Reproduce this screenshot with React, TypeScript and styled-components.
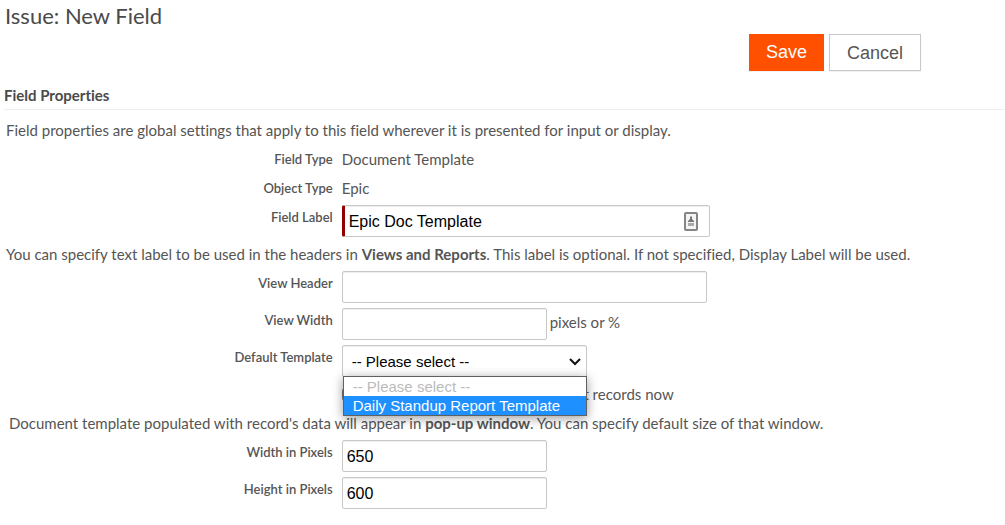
import React from 'react';
import styled, { createGlobalStyle, css } from 'styled-components';

const GlobalStyle = createGlobalStyle`
  *, *::before, *::after { box-sizing: border-box; }
  body {
    margin: 0;
    background: #fff;
    color: #555;
    font-family: Lato, "Liberation Sans", sans-serif;
    font-size: 15px;
    font-variant-ligatures: none;
    line-height: 20px;
  }
`;

const Form = styled.form`
  display: flex;
  flex-direction: column;
`;

const Title = styled.h1`
  margin: 0;
  padding: 2px 5px 0;
  color: #4a4a4a;
  font-size: 22px;
  font-weight: 400;
  line-height: 28px;
`;

const Toolbar = styled.div`
  display: flex;
  justify-content: flex-end;
  gap: 5px;
  margin-top: 4px;
  padding-right: 84px;
`;

const Button = styled.button<{ $primary?: boolean }>`
  height: 37px;
  padding: 0 17px;
  border: 1px solid #c8c8c8;
  background: #fff;
  color: #555;
  font-family: "Liberation Sans", Arial, sans-serif;
  font-size: 18px;
  line-height: 20px;
  box-shadow: 0 1px 1px rgba(0, 0, 0, 0.05);
  ${({ $primary }) =>
    $primary &&
    css`
      padding: 0 16px 2px;
      border-color: #ff5000;
      background: #ff5000;
      color: #fff;
    `}
`;

const SectionTitle = styled.h2`
  margin: 14px 0 0 4px;
  padding-bottom: 3px;
  border-bottom: 1px solid #eee;
  color: #4a4a4a;
  font-size: 15px;
  font-weight: 700;
  line-height: 21px;
`;

const Note = styled.p<{ $indent?: number }>`
  margin: 0;
  padding-left: ${({ $indent = 6 }) => $indent}px;
  line-height: 20px;
`;

const Fields = styled.div`
  display: flex;
  flex-direction: column;
  gap: 5px;
  padding: 7px 0 6px;
`;

const Section = styled.section`
  padding: 10px 0 1px;
`;

const Row = styled.div`
  display: grid;
  grid-template-columns: 34% 1fr;
  align-items: start;
`;

const labelStyle = css`
  padding: 2px 9px 0 0;
  font-size: 13px;
  font-weight: 600;
  line-height: 20px;
  text-align: right;
`;

const Label = styled.label`
  ${labelStyle}
`;

const Term = styled.span`
  ${labelStyle}
`;

const Value = styled.span`
  padding: 2px 0;
`;

const Control = styled.div`
  display: flex;
  align-items: center;
  gap: 3px;
`;

const Unit = styled.span`
  padding-bottom: 4px;
`;

const fieldBox = css`
  height: 32px;
  border: 1px solid #c8c8c8;
  border-radius: 2px;
  background: #fff;
  color: #000;
  font-family: "Liberation Sans", Arial, sans-serif;
  font-size: 16px;
  line-height: 20px;
  box-shadow: inset 0 1px 1px rgba(0, 0, 0, 0.07);
`;

const TextInput = styled.input<{ $width: number; $required?: boolean }>`
  ${fieldBox}
  width: ${({ $width }) => $width}px;
  max-width: 100%;
  padding: 2px 4px 0;
  ${({ $required }) =>
    $required &&
    css`
      border-left: 3px solid #900000;
    `}
`;

const InputWrap = styled.div`
  position: relative;
`;

const ContactIcon = styled.svg`
  position: absolute;
  top: 6px;
  right: 11px;
`;

const SelectWrap = styled.div`
  position: relative;
  width: 245px;
`;

const Select = styled.select`
  ${fieldBox}
  display: block;
  appearance: none;
  width: 100%;
  padding: 2px 28px 0 9px;
  font-size: 15px;
`;

const Chevron = styled.svg`
  position: absolute;
  top: 12px;
  right: 6px;
  pointer-events: none;
`;

const Menu = styled.ul`
  position: absolute;
  z-index: 1;
  top: 31px;
  left: 1px;
  right: 0;
  margin: 0;
  padding: 0;
  border: 1px solid #606060;
  background: #fff;
  list-style: none;
  box-shadow: 0 2px 10px rgba(0, 0, 0, 0.4);
`;

const Option = styled.li<{ $active?: boolean }>`
  padding: 0 9px;
  background: ${({ $active }) => ($active ? '#1e90ff' : '#fff')};
  color: ${({ $active }) => ($active ? '#fff' : '#bbb')};
  font-family: "Liberation Sans", Arial, sans-serif;
  font-size: 15px;
  line-height: 19px;
  white-space: nowrap;
`;

const CheckRow = styled.div`
  display: flex;
  align-items: center;
  justify-content: space-between;
  width: 332px;
  padding: 2px 0 3px;
`;

const Checkbox = styled.input`
  width: 13px;
  height: 13px;
  margin: 0;
`;

export default function App() {
  return (
    <Form onSubmit={(e) => e.preventDefault()}>
      <GlobalStyle />
      <Title>Issue: New Field</Title>
      <Toolbar>
        <Button type="submit" $primary>Save</Button>
        <Button type="button">Cancel</Button>
      </Toolbar>
      <SectionTitle>Field Properties</SectionTitle>

      <Section>
        <Note>
          Field properties are global settings that apply to this field wherever it is presented for
          input or display.
        </Note>
        <Fields>
          <Row>
            <Term>Field Type</Term>
            <Value>Document Template</Value>
          </Row>
          <Row>
            <Term>Object Type</Term>
            <Value>Epic</Value>
          </Row>
          <Row>
            <Label htmlFor="field-label">Field Label</Label>
            <Control>
              <InputWrap>
                <TextInput id="field-label" $width={368} $required defaultValue="Epic Doc Template" />
                <ContactIcon width="16" height="20" viewBox="0 0 16 20" aria-hidden="true">
                  <rect x="2" y="2" width="12" height="17" rx="1" fill="#f4f4f4" stroke="#858585" strokeWidth="2" />
                  <path d="M8 5l1 1v2l2 2v1H5v-1l2-2V6z" fill="#777" />
                  <path d="M5 13.500h6" stroke="#aaa" strokeWidth="3" />
                </ContactIcon>
              </InputWrap>
            </Control>
          </Row>
        </Fields>
      </Section>

      <Note>
        You can specify text label to be used in the headers in <b>Views and Reports</b>. This label
        is optional. If not specified, Display Label will be used.
      </Note>
      <Fields>
        <Row>
          <Label htmlFor="view-header">View Header</Label>
          <Control>
            <TextInput id="view-header" $width={365} />
          </Control>
        </Row>
        <Row>
          <Label htmlFor="view-width">View Width</Label>
          <Control>
            <TextInput id="view-width" $width={205} />
            <Unit>pixels or %</Unit>
          </Control>
        </Row>
        <Row>
          <Label htmlFor="default-template">Default Template</Label>
          <SelectWrap>
            <Select id="default-template" defaultValue="">
              <option value="">-- Please select --</option>
            </Select>
            <Chevron width="12" height="9" viewBox="0 0 12 9" aria-hidden="true">
              <path d="M1 2l5 5 5-5" fill="none" stroke="#111" strokeWidth="2" />
            </Chevron>
            <Menu role="listbox" aria-label="Default Template">
              <Option role="option" aria-selected={false}>-- Please select --</Option>
              <Option role="option" aria-selected $active>Daily Standup Report Template</Option>
            </Menu>
          </SelectWrap>
        </Row>
        <Row>
          <span />
          <CheckRow>
            <Checkbox type="checkbox" id="apply-now" />
            <label htmlFor="apply-now">t records now</label>
          </CheckRow>
        </Row>
      </Fields>

      <Note $indent={9}>
        Document template populated with record's data will appear in <b>pop-up window</b>. You can
        specify default size of that window.
      </Note>
      <Fields>
        <Row>
          <Label htmlFor="popup-width">Width in Pixels</Label>
          <Control>
            <TextInput id="popup-width" $width={205} defaultValue="650" />
          </Control>
        </Row>
        <Row>
          <Label htmlFor="popup-height">Height in Pixels</Label>
          <Control>
            <TextInput id="popup-height" $width={205} defaultValue="600" />
          </Control>
        </Row>
      </Fields>
    </Form>
  );
}
